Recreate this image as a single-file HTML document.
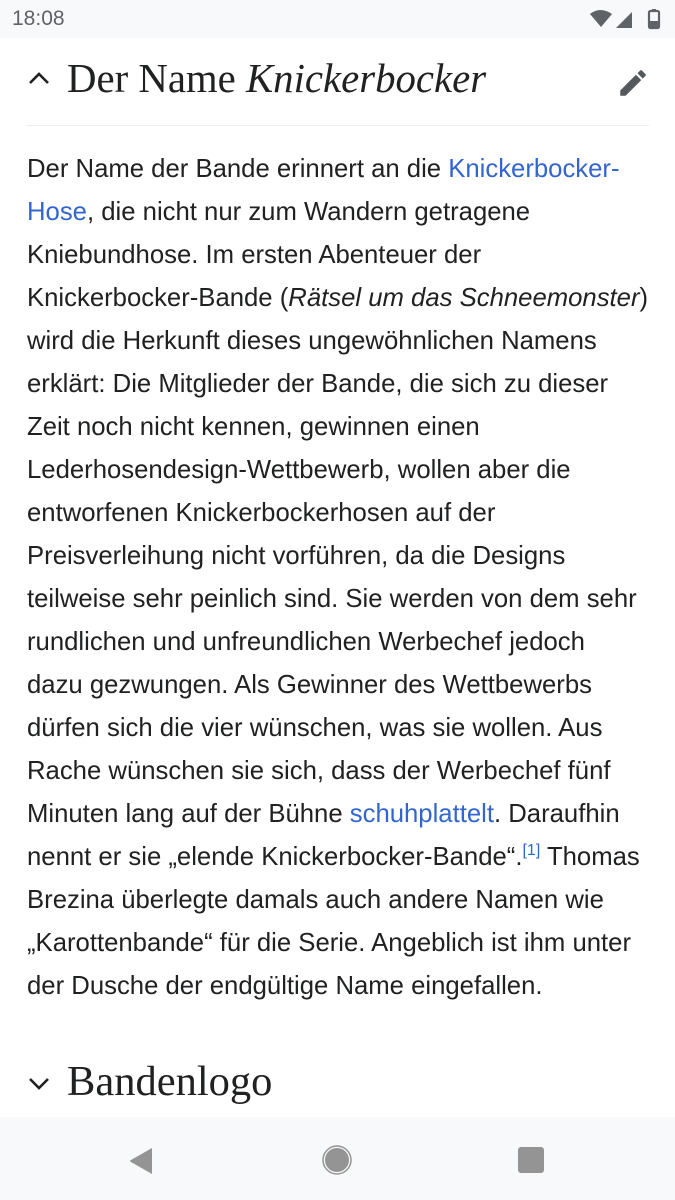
<!DOCTYPE html>
<html><head><meta charset="utf-8"><style>
html,body{margin:0;padding:0;width:675px;height:1200px;overflow:hidden;background:#fff;position:relative;font-family:"Liberation Sans",sans-serif;color:#202122}
.sb{position:absolute;left:0;top:0;width:675px;height:38px;background:#f8f9fa}
.time{position:absolute;left:12px;top:7px;font-size:21px;color:#5f6368}
.nav{position:absolute;left:0;top:1117px;width:675px;height:83px;background:#f8f9fa}
h2{position:absolute;margin:0;font-family:"Liberation Serif",serif;font-weight:normal;font-size:40.8px;left:67px;white-space:nowrap}
.hr{position:absolute;left:27px;top:125px;width:622px;height:1px;background:#eaecf0}
.txt{position:absolute;left:27px;top:148px;font-size:25.7px;line-height:43px;white-space:nowrap}
a{color:#3366cc;text-decoration:none}
sup{font-size:16px;line-height:0;vertical-align:10px}
</style></head><body>
<div class="sb"><span class="time">18:08</span>
<svg style="position:absolute;left:588px;top:8px" width="80" height="22" viewBox="0 0 80 22">
<path d="M2 6 Q12 -2 24 6 L13 19 Z" fill="#5f6368"/>
<path d="M44 4 L44 20 L28 20 Z" fill="#5f6368"/>
<rect x="61" y="3" width="10" height="17" rx="1.5" fill="none" stroke="#5f6368" stroke-width="2.2"/>
<rect x="64" y="1" width="4" height="3" fill="#5f6368"/>
<rect x="62" y="13" width="8" height="6" fill="#5f6368"/>
</svg></div>
<svg style="position:absolute;left:28px;top:70px" width="22" height="16" viewBox="0 0 22 16"><path d="M2 13 L11 4 L20 13" fill="none" stroke="#202122" stroke-width="2.6"/></svg>
<h2 style="top:55px">Der Name <i>Knickerbocker</i></h2>
<svg style="position:absolute;left:616px;top:66px" width="34" height="34" viewBox="0 0 24 24"><path d="M3 17.25V21h3.75L17.81 9.94l-3.75-3.75L3 17.25zM20.71 7.04a1 1 0 000-1.41l-2.34-2.34a1 1 0 00-1.41 0l-1.830 1.83 3.75 3.75 1.83-1.83z" fill="#54595d"/></svg>
<div class="hr"></div>
<div class="txt">Der Name der Bande erinnert an die <a>Knickerbocker-</a><br><a>Hose</a>, die nicht nur zum Wandern getragene<br>Kniebundhose. Im ersten Abenteuer der<br>Knickerbocker-Bande (<i>Rätsel um das Schneemonster</i>)<br>wird die Herkunft dieses ungewöhnlichen Namens<br>erklärt: Die Mitglieder der Bande, die sich zu dieser<br>Zeit noch nicht kennen, gewinnen einen<br>Lederhosendesign-Wettbewerb, wollen aber die<br>entworfenen Knickerbockerhosen auf der<br>Preisverleihung nicht vorführen, da die Designs<br>teilweise sehr peinlich sind. Sie werden von dem sehr<br>rundlichen und unfreundlichen Werbechef jedoch<br>dazu gezwungen. Als Gewinner des Wettbewerbs<br>dürfen sich die vier wünschen, was sie wollen. Aus<br>Rache wünschen sie sich, dass der Werbechef fünf<br>Minuten lang auf der Bühne <a>schuhplattelt</a>. Daraufhin<br>nennt er sie „elende Knickerbocker-Bande“.<sup><a>[1]</a></sup> Thomas<br>Brezina überlegte damals auch andere Namen wie<br>„Karottenbande“ für die Serie. Angeblich ist ihm unter<br>der Dusche der endgültige Name eingefallen.</div>
<svg style="position:absolute;left:28px;top:1076px" width="22" height="16" viewBox="0 0 22 16"><path d="M2 3 L11 12 L20 3" fill="none" stroke="#202122" stroke-width="2.6"/></svg>
<h2 style="top:1057px;font-size:42.5px">Bandenlogo</h2>
<div class="nav">
<svg style="position:absolute;left:128px;top:30px" width="26" height="28" viewBox="0 0 26 28"><path d="M24 1 L24 27 L3 15 Q1 14 3 13 Z" fill="#949494"/></svg>
<svg style="position:absolute;left:321px;top:27px" width="32" height="32" viewBox="0 0 32 32"><circle cx="16" cy="16" r="14" fill="none" stroke="#949494" stroke-width="1.5"/><circle cx="16" cy="16" r="12" fill="#949494"/></svg>
<div style="position:absolute;left:518px;top:30px;width:26px;height:26px;background:#949494;border-radius:3px"></div>
</div>
</body></html>
